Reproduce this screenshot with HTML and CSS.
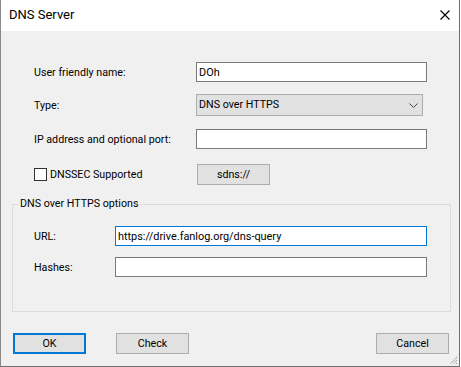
FILE: index.html
```html
<!DOCTYPE html>
<html>
<head>
<meta charset="utf-8">
<title>DNS Server</title>
<link rel="stylesheet" href="styles.css">
</head>
<body>
<div class="window">
  <div class="titlebar">
    <span class="title">DNS Server</span>
    <svg class="close" width="10" height="10" viewBox="0 0 10 10"><path d="M0.5 0.5 L9.5 9.5 M9.5 0.5 L0.5 9.5" stroke="#000" stroke-width="1.1" fill="none"/></svg>
  </div>
  <div class="client">
    <div class="form">
      <div class="row r1">
        <span class="lbl">User friendly name:</span>
        <div class="input wide">DOh</div>
      </div>
      <div class="row r2">
        <span class="lbl">Type:</span>
        <div class="select">
          <span>DNS over HTTPS</span>
          <svg class="chev" width="9" height="5" viewBox="0 0 9 5"><path d="M0.5 0.5 L4.5 4.5 L8.5 0.5" stroke="#444" stroke-width="1" fill="none"/></svg>
        </div>
      </div>
      <div class="row r3">
        <span class="lbl">IP address and optional port:</span>
        <div class="input wide"></div>
      </div>
      <div class="row r4">
        <span class="lbl check"><span class="box"></span>DNSSEC Supported</span>
        <div class="btn sdns">sdns://</div>
      </div>
    </div>
    <div class="group">
      <span class="legend">DNS over HTTPS options</span>
      <div class="grow g1">
        <span class="glbl">URL:</span>
        <div class="input long focus">https://drive.fanlog.org/dns-query</div>
      </div>
      <div class="grow g2">
        <span class="glbl">Hashes:</span>
        <div class="input long"></div>
      </div>
    </div>
    <div class="buttons">
      <div class="btn default">OK</div>
      <div class="btn">Check</div>
      <div class="spacer"></div>
      <div class="btn">Cancel</div>
    </div>
    <svg class="grip" width="9" height="9" viewBox="0 0 9 9">
      <path d="M8 1 L1 8 M8 4 L4 8 M8 7 L7 8" stroke="#a0a0a0" stroke-width="1.2" stroke-dasharray="1 1" fill="none"/>
    </svg>
  </div>
</div>
</body>
</html>
```
FILE: styles.css
```css
html, body {
  margin: 0;
  padding: 0;
}
body {
  background: #ffffff;
  font-family: Roboto, "Liberation Sans", sans-serif;
  font-size: 10.7px;
  color: #000;
}
.window {
  width: 460px;
  height: 367px;
  box-sizing: border-box;
  border-left: 1px solid #8a8a8a;
  border-right: 1px solid #6e6e6e;
  border-bottom: 1px solid #6e6e6e;
  display: flex;
  flex-direction: column;
}
.titlebar {
  height: 31px;
  flex: none;
  background: #fff;
  display: flex;
  align-items: center;
  padding: 0 9px 2px 8px;
  box-sizing: border-box;
}
.title {
  font-size: 13px;
  flex: 1;
}
.close {
  display: block;
}
.client {
  flex: 1;
  background: #f0f0f0;
  position: relative;
  display: flex;
  flex-direction: column;
}
.form {
  padding: 31px 0 0 33px;
  display: flex;
  flex-direction: column;
}
.row {
  display: flex;
  align-items: center;
}
.r1 { height: 20px; }
.r2 { height: 22px; margin-top: 12px; }
.r3 { height: 20px; margin-top: 13px; }
.r4 { height: 21px; margin-top: 15px; }
.lbl {
  width: 162px;
  flex: none;
}
.input {
  box-sizing: border-box;
  height: 20px;
  background: #fff;
  border: 1px solid #7a7a7a;
  padding: 0 2px;
  display: flex;
  align-items: center;
  font-size: 10.9px;
}
.wide { width: 231px; }
.long { width: 312px; }
.focus { border-color: #0078d7; }
.select {
  box-sizing: border-box;
  width: 227px;
  height: 22px;
  background: #e1e1e1;
  border: 1px solid #adadad;
  padding: 0 4px 1px 2px;
  display: flex;
  align-items: center;
  justify-content: space-between;
}
.chev { display: block; margin-top: 1px; }
.check {
  display: flex;
  align-items: center;
}
.box {
  width: 13px;
  height: 13px;
  box-sizing: border-box;
  border: 1px solid #333;
  background: #fff;
  margin-right: 3px;
}
.btn {
  box-sizing: border-box;
  width: 73px;
  height: 21px;
  background: #e1e1e1;
  border: 1px solid #adadad;
  display: flex;
  align-items: center;
  justify-content: center;
  flex: none;
}
.sdns { margin-left: 1px; }
.group {
  margin: 19px 0 0 11px;
  width: 439px;
  height: 108px;
  box-sizing: border-box;
  border: 1px solid #dcdcdc;
  display: flex;
  flex-direction: column;
  align-items: flex-start;
}
.legend {
  margin: -8px 0 0 5px;
  padding: 0 2px;
  height: 14px;
  line-height: 14px;
  background: #f0f0f0;
}
.grow {
  display: flex;
  align-items: center;
  padding-left: 21px;
}
.g1 { margin-top: 15px; }
.g2 { margin-top: 11px; }
.glbl {
  width: 81px;
  flex: none;
}
.buttons {
  display: flex;
  margin: 21px 10px 0 12px;
  gap: 30px;
}
.spacer { flex: 1; }
.default {
  border: 2px solid #0078d7;
}
.grip {
  position: absolute;
  right: 1px;
  bottom: 1px;
}
```
